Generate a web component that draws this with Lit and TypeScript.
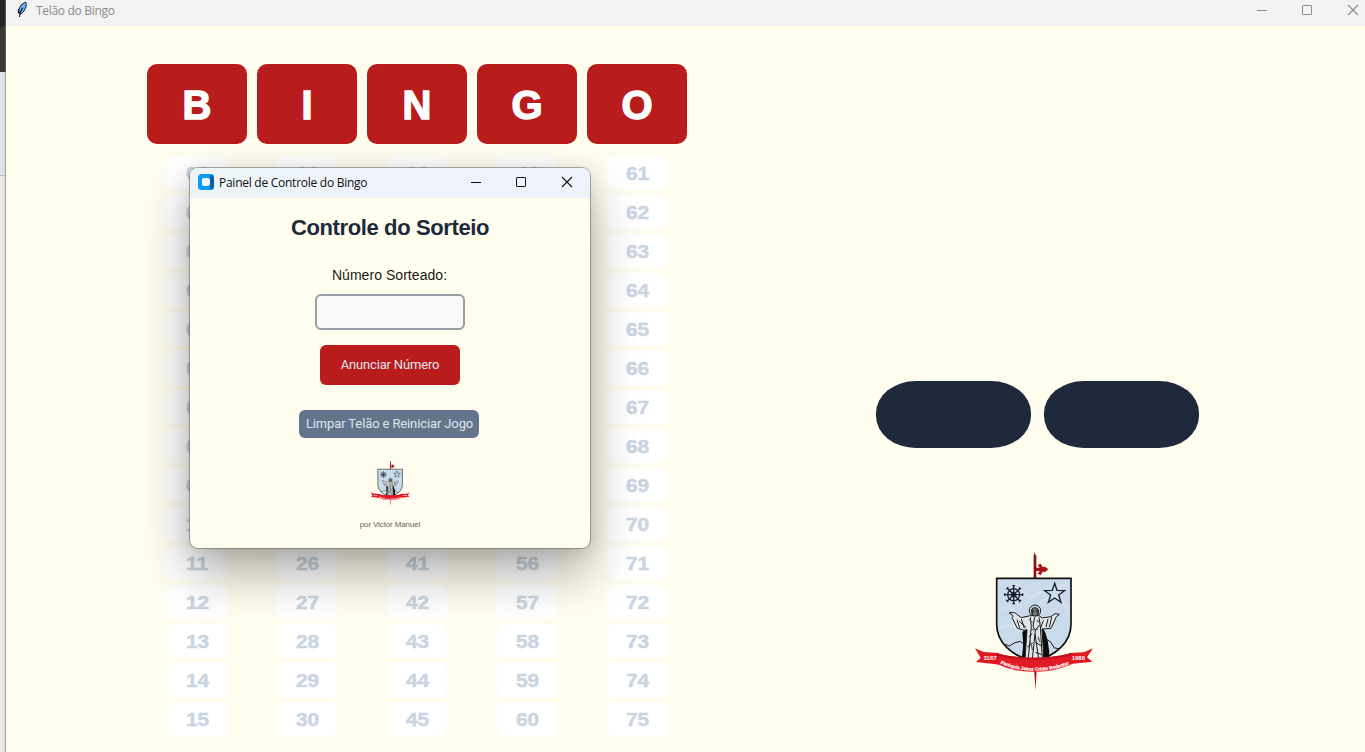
import { LitElement, html, css, svg } from "lit";
import { customElement, property } from "lit/decorators.js";

@customElement("parish-crest")
export class ParishCrest extends LitElement {
  static styles = css`
    :host { display: block; }
    svg { display: block; width: 100%; height: 100%; overflow: visible; }
    text { font-family: "Liberation Sans", Arial, sans-serif; font-weight: 700; fill: #fff; }
  `;

  render() {
    const spokes = [0, 45, 90, 135].map(
      (a) => svg`<path d="M-28 0H28M-27 -4V4M27 -4V4" transform="rotate(${a})" />`
    );
    return html`
      <svg viewBox="0 0 390 450">
        <defs>
          <clipPath id="shield"><path d="M80 100H303V238C303 292 260 331 191 351C123 331 80 292 80 238Z" /></clipPath>
          <path id="motto" d="M91 356Q190 398 299 358" />
        </defs>
        <path d="M189 40L187 75L162 64L167 73L151 71L158 79L151 86L167 84L163 92L188 82Z" fill="#fff" opacity=".9" />
        <path d="M193 22L199 34V100H191V34Z" fill="#8c0d12" />
        <path d="M197 68H209L203 60L212 56L218 66L225 65L235 73L225 81L218 80L212 91L203 86L209 78H197Z" fill="#a3151b" />
        <path d="M192 370H200L197 437Z" fill="#a3151b" />
        <path d="M80 100H303V238C303 292 260 331 191 351C123 331 80 292 80 238Z" fill="#c9daea" />
        <g clip-path="url(#shield)">
          <path d="M90 120Q130 90 150 130T200 150T290 120M85 200Q120 170 140 210T210 180T300 210M90 250Q130 230 150 260" fill="none" stroke="#d9e5f0" stroke-width="9" opacity=".6" />
          <path d="M79 309Q104 293 118 303Q135 290 151 289L163 298M228 281Q246 290 252 308L270 313L282 321" fill="none" stroke="#171717" stroke-width="3" />
          <path d="M157 262L173 246L216 244Q240 280 238 350H152Q163 315 157 262Z" fill="#0c0c0c" />
        </g>
        <path d="M80 100H303V238C303 292 260 331 191 351C123 331 80 292 80 238Z" fill="none" stroke="#101113" stroke-width="5" />
        <g transform="translate(131 149)" fill="none" stroke="#17202a" stroke-width="4">
          <circle r="18" /><circle r="6" fill="#17202a" />${spokes}
        </g>
        <path d="M254 115L261 136L284 137L266 150L273 172L254 159L235 172L242 150L224 137L247 136Z" fill="none" stroke="#17202a" stroke-width="4" />
        <g stroke="#17191b" stroke-width="3" stroke-linejoin="round">
          <circle cx="195" cy="197" r="17" fill="#cedbe6" />
          <path d="M181 212L154 218L134 203L117 203L130 213L126 217L142 250L163 256L171 254L165 343L190 349L222 345L216 252L243 250L259 215L268 208L255 206L243 215L217 219L207 212Z" fill="#e2e5e7" />
          <path d="M184 195Q195 181 206 195L204 210Q195 218 187 210Z" fill="#777c80" />
          <path d="M188 188V207M201 188V207M186 198H204" fill="none" stroke-width="2" />
          <path d="M181 217L184 244L175 338M194 217L189 244L196 257L187 342M207 217L211 246L217 339M196 257L208 240M195 267L206 341M148 229L168 247M141 224L149 249M154 222L163 250M234 222L228 246M245 217L238 246M220 226L212 249M176 276L187 266M172 306L188 294M196 292L213 302M197 322L215 329" fill="none" stroke-width="3" />
          <path d="M178 223L187 233M200 226L212 235M182 254H204M180 287L188 316M204 275L210 292" fill="none" stroke="#62676b" stroke-width="4" />
        </g>
        <path d="M15 310L41 321L85 324L103 351L91 359L18 351L32 338Z" fill="#e01822" />
        <path d="M369 310L342 322L298 324L280 351L294 358L367 350L351 337Z" fill="#e01822" />
        <path d="M80 324L103 331L102 359L83 351ZM303 324L279 331L281 359L299 351Z" fill="#8f0e15" />
        <path d="M84 326Q190 350 299 326L305 358Q251 382 192 380Q132 382 79 356Z" fill="#e21a25" />
        <path d="M84 326Q190 350 299 326L300 332Q190 357 83 332Z" fill="#c3121d" />
        <text x="41" y="346" font-size="16" textLength="39" lengthAdjust="spacingAndGlyphs">31/07</text>
        <text x="305" y="346" font-size="16" textLength="40" lengthAdjust="spacingAndGlyphs">1986</text>
        <text font-size="15" stroke="#fff" stroke-width=".5"><textPath href="#motto" textLength="212" lengthAdjust="spacingAndGlyphs">Paróquia Jesus Cristo Redentor</textPath></text>
      </svg>
    `;
  }
}

@customElement("window-buttons")
export class WindowButtons extends LitElement {
  static styles = css`
    :host { display: block; }
    svg { display: block; fill: none; stroke: currentColor; }
  `;

  render() {
    return html`
      <svg width="103" height="12" viewBox="0 0 103 12">
        <path d="M1 6.5H11" />
        <rect x="46.5" y="1.5" width="9" height="9" rx=".6" />
        <path d="M92 1L102 11M102 1L92 11" stroke-width="1.1" />
      </svg>
    `;
  }
}

@customElement("bingo-column")
export class BingoColumn extends LitElement {
  @property() letter = "";
  @property({ type: Number }) start = 1;

  static styles = css`
    :host { display: flex; flex-direction: column; align-items: center; width: 100px; }
    .letter {
      width: 100px; height: 80px; border-radius: 10px; background: #b91c1c; color: #fff;
      display: flex; align-items: center; justify-content: center; margin-bottom: 12px;
      font-size: 40px; font-weight: 700; -webkit-text-stroke: 1.4px #fff;
      stroke-linejoin: round;
    }
    .letter span { padding-top: 2px; }
    .numbers { display: flex; flex-direction: column; gap: 5px; }
    .number {
      width: 60px; height: 34px; border-radius: 6px; background: #fff; color: #cbd5e1;
      display: flex; align-items: center; justify-content: center;
      font-size: 19px; font-weight: 700; -webkit-text-stroke: .5px #cbd5e1;
    }
    .number span { transform: scaleX(1.1); padding-left: 1px; padding-top: 1px; }
  `;

  render() {
    const numbers = Array.from({ length: 15 }, (_, i) => String(this.start + i).padStart(2, "0"));
    return html`
      <div class="letter"><span>${this.letter}</span></div>
      <div class="numbers">
        ${numbers.map((n) => html`<div class="number"><span>${n}</span></div>`)}
      </div>
    `;
  }
}

@customElement("control-panel")
export class ControlPanel extends LitElement {
  static styles = css`
    :host {
      display: flex; flex-direction: column; width: 400px; height: 380px; overflow: hidden;
      border-radius: 8px; background: #fffdee;
      box-shadow: 0 0 0 1px rgba(90, 90, 90, .5), 0 24px 50px rgba(0, 0, 0, .33), 0 2px 18px rgba(0, 0, 0, .11);
    }
    .bar { flex: none; height: 30px; display: flex; align-items: center; padding: 0 17px 0 8px; background: linear-gradient(90deg, #ecf4f7, #eef3fb 60%); color: #111; }
    .bar svg { margin-top: -2px; }
    .title { flex: 1; margin: -1px 0 0 5px; font: 12px "Open Sans", sans-serif; letter-spacing: -.26px; white-space: nowrap; }
    window-buttons { margin-top: -2px; }
    .body { flex: 1; display: flex; flex-direction: column; align-items: center; }
    h1 { margin: 17px 0 0; font-size: 22px; line-height: 26px; font-weight: 700; letter-spacing: -.38px; color: #1e293b; white-space: nowrap; }
    label { margin-top: 26px; margin-right: 1px; font-size: 14px; line-height: 16px; color: #1a1a1a; letter-spacing: .05px; }
    input { box-sizing: border-box; width: 150px; height: 36px; margin: 11px 0 0; border: 2px solid #979da2; border-radius: 6px; background: #f9f9fa; outline: none; }
    button { border: 0; padding: 0 0 2px; border-radius: 6px; color: #dce4ee; font: 13px Roboto, sans-serif; white-space: nowrap; }
    .announce { width: 140px; height: 40px; margin-top: 15px; background: #b91c1c; letter-spacing: -.16px; }
    .reset { width: 180px; height: 28px; margin-top: 25px; margin-right: 2px; padding-left: 1px; background: #64748b; letter-spacing: -.12px; }
    parish-crest { width: 43px; height: 50px; margin-top: 20px; }
    .author { margin-top: 12px; font-size: 8px; line-height: 10px; letter-spacing: -.12px; color: #6b625c; white-space: nowrap; }
  `;

  render() {
    return html`
      <div class="bar">
        <svg width="16" height="16" viewBox="0 0 16 16">
          <rect width="16" height="16" rx="3.5" fill="#0a9bfb" />
          <path d="M11 4L14 .7Q16 1.5 16 4V12Q16 15 13.5 15.8L11 12Z" fill="#0660b0" />
          <rect x="4" y="4" width="8" height="8" rx="2" fill="#f2f7fb" />
        </svg>
        <div class="title">Painel de Controle do Bingo</div>
        <window-buttons></window-buttons>
      </div>
      <div class="body">
        <h1>Controle do Sorteio</h1>
        <label for="drawn">Número Sorteado:</label>
        <input id="drawn" type="text" />
        <button class="announce">Anunciar Número</button>
        <button class="reset">Limpar Telão e Reiniciar Jogo</button>
        <parish-crest></parish-crest>
        <div class="author">por Victor Manuel</div>
      </div>
    `;
  }
}

@customElement("app-root")
export class AppRoot extends LitElement {
  static styles = css`
    :host {
      display: flex; position: relative; width: 100%; height: 752px; overflow: hidden;
      font-family: "Liberation Sans", Arial, sans-serif; background: #e6e7e9;
    }
    .behind { flex: none; width: 6px; display: flex; flex-direction: column; }
    .dark { height: 26px; background: #262626; }
    .tab { height: 46px; background: #3a3a3a; border-top-left-radius: 5px; }
    .tabwrap { background: #262626; }
    .pale { height: 103px; background: linear-gradient(90deg, #e6e7ea, #d8d9dc); border-bottom: 1px solid #b9bec6; }
    .rest { flex: 1; background: linear-gradient(90deg, #eeeeef, #dadada); }
    .window { flex: 1; display: flex; flex-direction: column; background: #fffdee; box-shadow: -1px 0 0 rgba(120, 120, 120, .55); }
    .bar { flex: none; height: 26px; display: flex; align-items: flex-start; padding: 0 6px 0 10px; background: #f3f3f3; color: #8c8c8c; }
    .bar .feather { margin-top: 1px; }
    .title { flex: 1; margin-left: 8px; padding-top: 3px; font: 12px/16px "Open Sans", sans-serif; letter-spacing: -.3px; }
    .bar window-buttons { margin-top: 4px; }
    .content { flex: 1; display: flex; min-height: 0; }
    .board { flex: none; display: flex; gap: 10px; padding: 38px 0 0 141px; }
    .stage { flex: 1; display: flex; flex-direction: column; align-items: center; padding: 355px 0 0 18px; }
    .balls { display: flex; gap: 13px; padding-left: 4px; }
    .ball { width: 155px; height: 67px; border-radius: 40px / 32px; background: #1e293b; }
    .stage parish-crest { width: 130px; height: 150px; margin-top: 97px; }
    control-panel { position: absolute; left: 190px; top: 168px; }
  `;

  render() {
    return html`
      <div class="behind">
        <div class="dark"></div>
        <div class="tabwrap"><div class="tab"></div></div>
        <div class="pale"></div>
        <div class="rest"></div>
      </div>
      <div class="window">
        <div class="bar">
          <svg class="feather" width="12" height="17" viewBox="0 0 12 17">
            <path d="M9.5 1Q11 2 10 6L8 10L5 13L3 12L2.5 9Q4 3 9.5 1Z" fill="#6aabf2" stroke="#101820" stroke-width=".9" />
            <path d="M6.5 7L4.5 11L3.5 16" fill="none" stroke="#101820" stroke-width="1.1" />
            <path d="M2.8 8L2.3 11L4 13" fill="none" stroke="#101820" stroke-width="1.3" />
          </svg>
          <div class="title">Telão do Bingo</div>
          <window-buttons></window-buttons>
        </div>
        <div class="content">
          <div class="board">
            ${["B", "I", "N", "G", "O"].map(
              (l, i) => html`<bingo-column .letter=${l} .start=${i * 15 + 1}></bingo-column>`
            )}
          </div>
          <div class="stage">
            <div class="balls"><div class="ball"></div><div class="ball"></div></div>
            <parish-crest></parish-crest>
          </div>
        </div>
      </div>
      <control-panel></control-panel>
    `;
  }
}
